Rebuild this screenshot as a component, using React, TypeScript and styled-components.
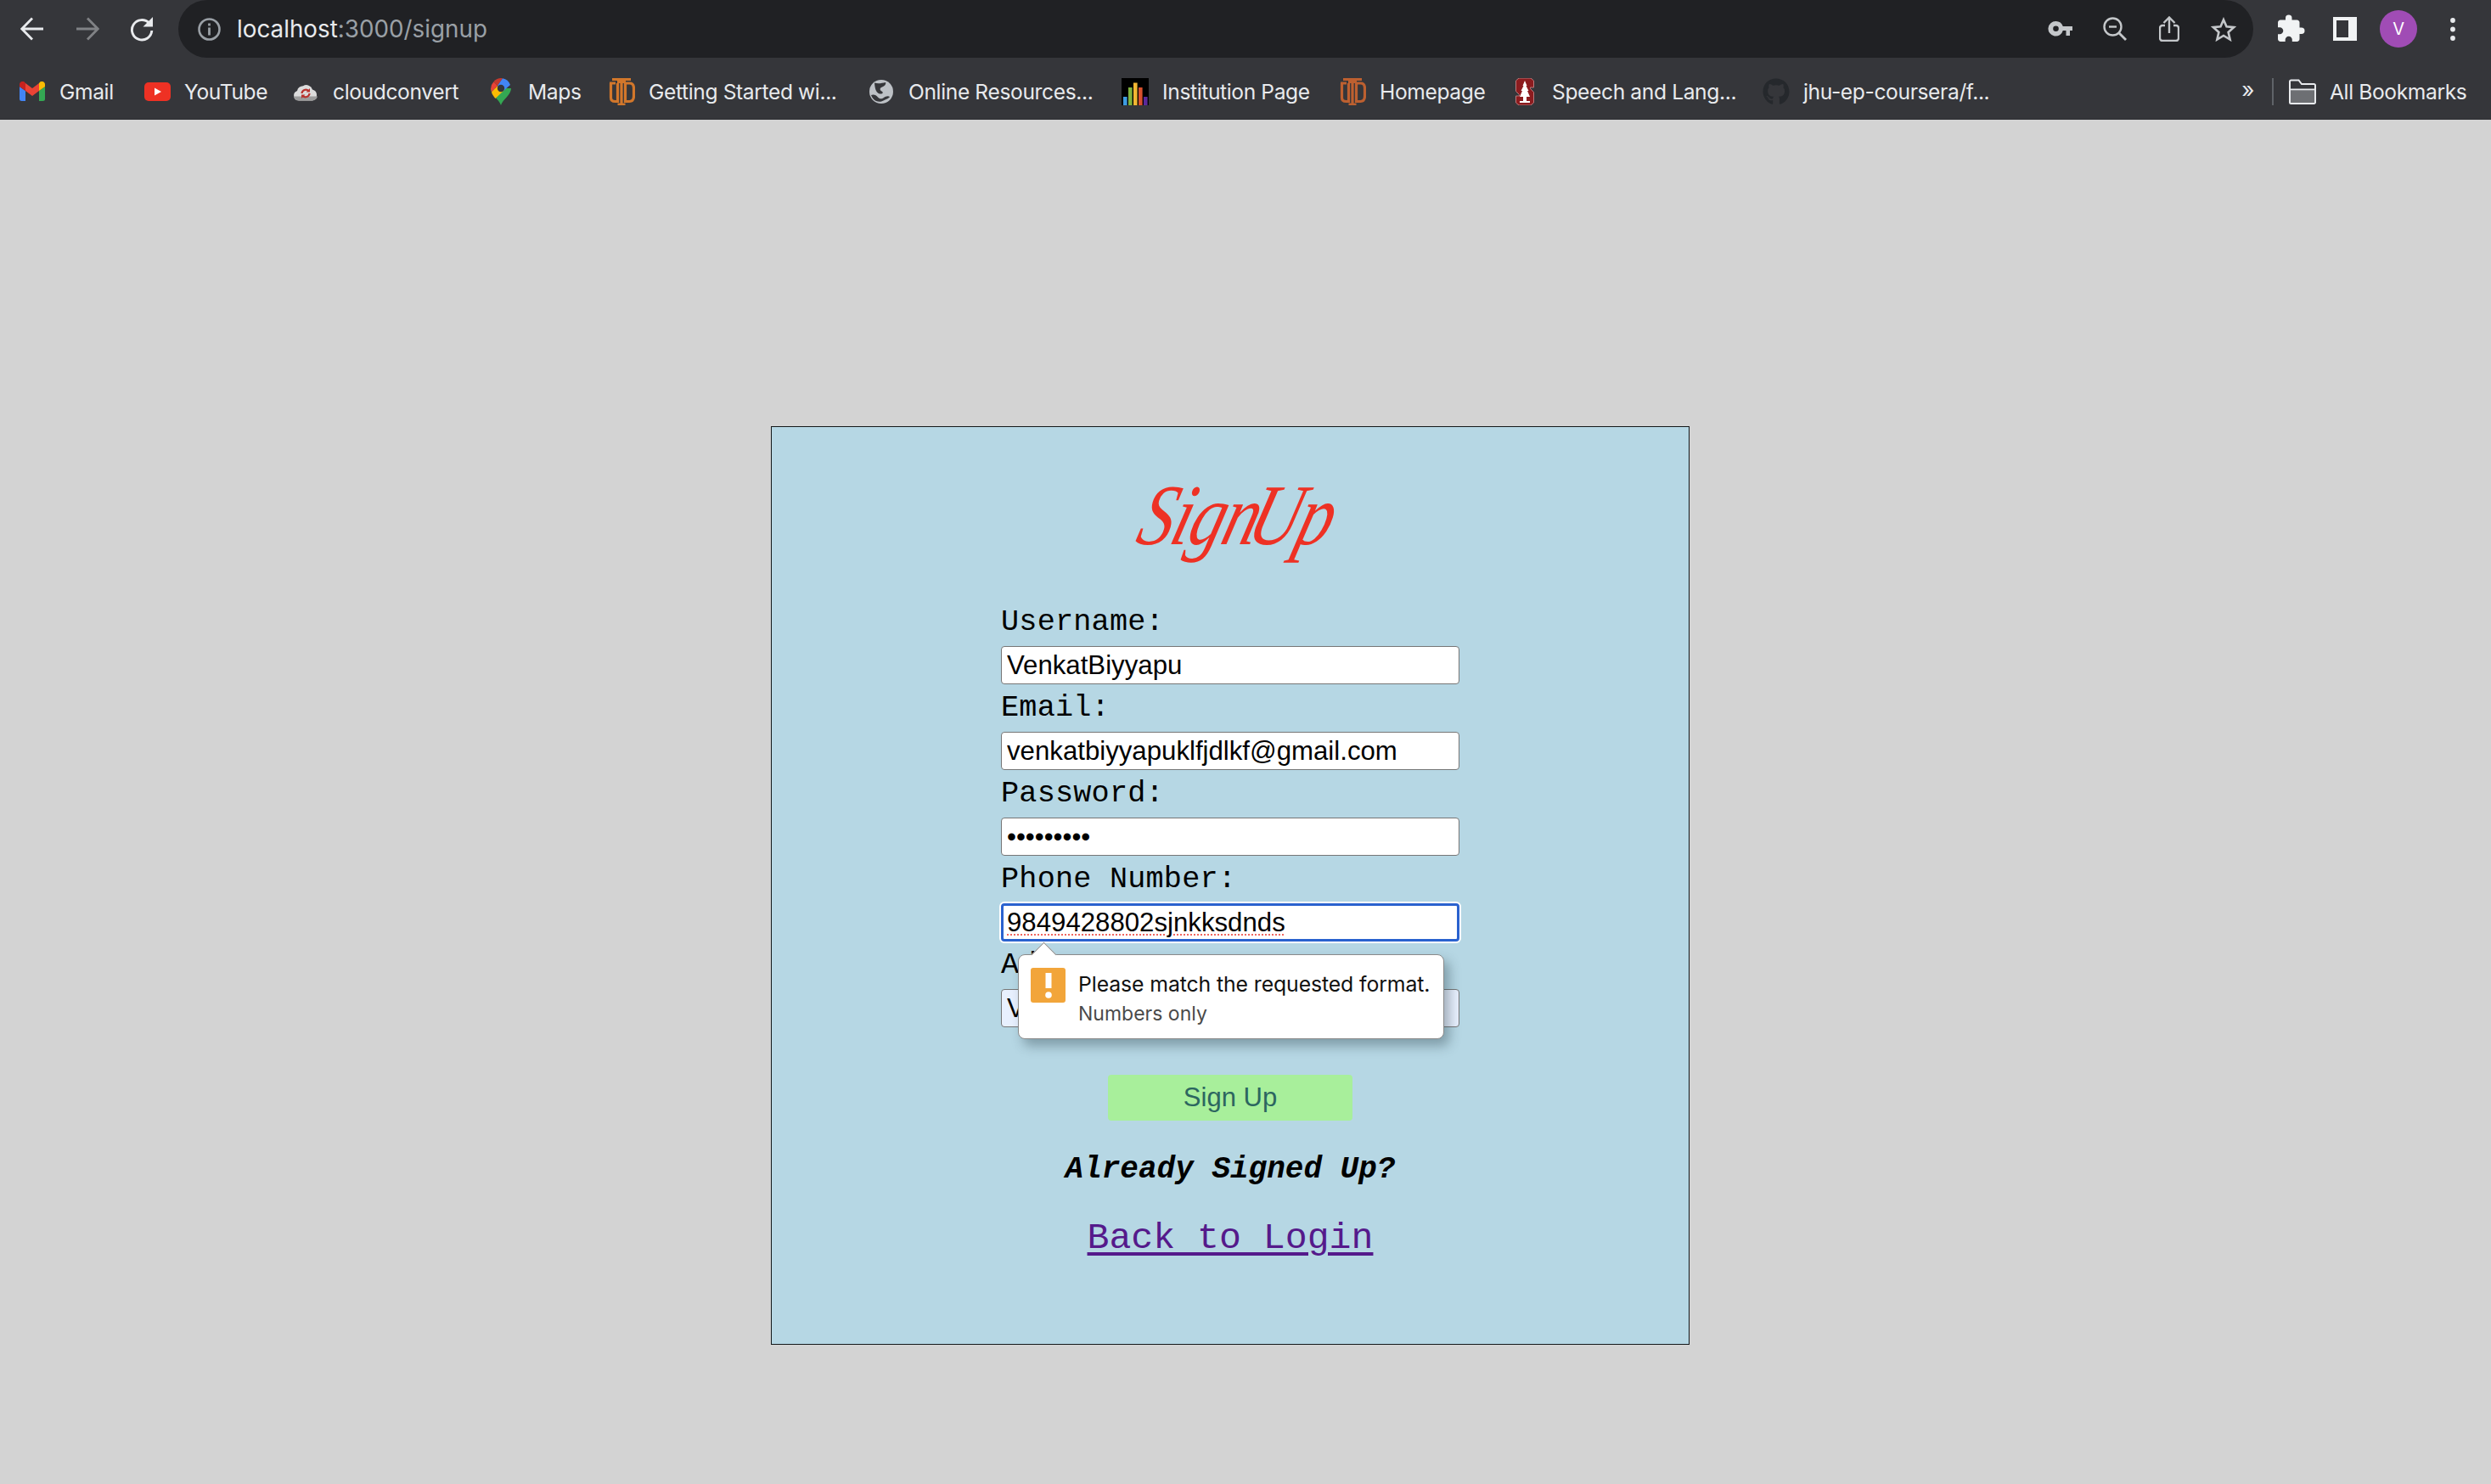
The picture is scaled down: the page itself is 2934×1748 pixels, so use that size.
import React from "react";
import styled, { createGlobalStyle } from "styled-components";
import { FaGithub } from "react-icons/fa";
import { MdExtension } from "react-icons/md";

const Global = createGlobalStyle`
  html, body { margin: 0; padding: 0; background: #d3d3d3; }
  body { font-family: "Liberation Sans", Arial, sans-serif; }
  * { box-sizing: border-box; }
`;

const Chrome = styled.header`
  background: #35363a;
  height: 141px;
  display: flex;
  flex-direction: column;
  border-bottom: 1px solid #2e2f33;
`;
const Toolbar = styled.div`
  display: flex;
  height: 72px;
  padding-left: 24px;
  align-items: flex-start;
`;
const NavGroup = styled.div`
  display: flex;
  gap: 36.5px;
  height: 68px;
  align-items: center;
  margin-right: 29px;
`;
const Omnibox = styled.div`
  width: 2444px;
  height: 68px;
  border-radius: 34px;
  background: #202124;
  display: flex;
  align-items: center;
  padding: 0 17px 0 23px;
`;
const Url = styled.div`
  margin-left: 19px;
  font: 400 27.8px Inter, "Liberation Sans", sans-serif;
  color: #e8eaed;
  flex: 1;
`;
const UrlRest = styled.span`
  color: #9aa0a6;
`;
const OmniActions = styled.div`
  display: flex;
  gap: 28.2px;
`;
const ActionSlot = styled.div`
  width: 36px;
  height: 36px;
  display: flex;
  align-items: center;
  justify-content: center;
`;
const ToolActions = styled.div`
  display: flex;
  gap: 19.6px;
  margin-left: 22px;
  height: 68px;
  align-items: center;
`;
const ToolSlot = styled.div`
  width: 44px;
  height: 44px;
  display: flex;
  align-items: center;
  justify-content: center;
`;
const Avatar = styled.div`
  width: 44px;
  height: 44px;
  border-radius: 50%;
  background: #a04cb5;
  color: #fff;
  font: 400 20px Inter, "Liberation Sans", sans-serif;
  display: flex;
  align-items: center;
  justify-content: center;
`;
const Bookmarks = styled.div`
  flex: 1;
  display: flex;
  align-items: center;
  padding: 3px 30px 0 22px;
  color: #e8eaed;
  font: 400 24.6px Inter, "Liberation Sans", sans-serif;
  letter-spacing: -0.38px;
`;
const Bookmark = styled.div<{ $w: number }>`
  width: ${(p) => p.$w}px;
  display: flex;
  align-items: center;
  gap: 16px;
  white-space: nowrap;
`;
const FavSlot = styled.div`
  width: 32px;
  height: 32px;
  flex: none;
  display: flex;
  align-items: center;
  justify-content: center;
`;
const Overflow = styled.div`
  margin-left: auto;
  font-size: 26px;
  line-height: 1;
  margin-top: -4px;
`;
const BarDivider = styled.div`
  width: 2px;
  height: 32px;
  background: #5f6368;
  margin: 0 18px 0 21px;
`;

const Page = styled.main`
  display: flex;
  justify-content: center;
  padding: 361px 36px 0 0;
`;
const Card = styled.section`
  width: 1082px;
  height: 1082px;
  background: #b6d7e4;
  border: 1px solid #14181a;
  display: flex;
  flex-direction: column;
  align-items: center;
`;
const TitleWrap = styled.div`
  height: 202px;
  display: flex;
  align-items: flex-start;
  justify-content: center;
  padding: 48px 0 0 18px;
`;
const Title = styled.h1`
  margin: 0;
  font: italic 400 102px/1.1 "Liberation Serif", serif;
  color: #ee3124;
  word-spacing: -0.34em;
  letter-spacing: -2px;
  transform: skewX(-16deg) scaleX(0.8);
  white-space: nowrap;
`;
const Form = styled.form`
  width: 540px;
  display: flex;
  flex-direction: column;
  align-items: stretch;
`;
const Field = styled.div`
  position: relative;
`;
const Label = styled.label`
  display: block;
  height: 56px;
  font: 400 35.2px/56px "Liberation Mono", "Courier New", monospace;
  letter-spacing: 0.2px;
  color: #000;
`;
const Input = styled.input<{ $autofill?: boolean }>`
  display: block;
  width: 540px;
  height: 45px;
  padding: 0 6px;
  font: 400 31.2px "Liberation Sans", Arial, sans-serif;
  color: #000;
  background: ${(p) => (p.$autofill ? "#e8f0fe" : "#fff")};
  border: 1.5px solid #767676;
  border-radius: 4px;
  outline: none;
`;
const FocusedInput = styled(Input)`
  border: 3px solid #2a62cf;
  padding: 0 4px;
  box-shadow: 0 0 0 2px #fff;
  text-decoration: underline dotted #f0655f 2px;
  text-underline-offset: 4px;
`;
const Bubble = styled.div`
  position: absolute;
  left: 20px;
  top: 116px;
  width: 502px;
  height: 100px;
  background: #fff;
  border: 1px solid #8a8a8a;
  border-radius: 8px;
  box-shadow: 6px 8px 14px rgba(40, 60, 70, 0.38);
  display: flex;
  align-items: flex-start;
  gap: 15px;
  padding: 15px 0 0 14px;
  z-index: 2;
  &::before {
    content: "";
    position: absolute;
    left: 19px;
    top: -11px;
    width: 20px;
    height: 20px;
    background: #fff;
    border-left: 1px solid #8a8a8a;
    border-top: 1px solid #8a8a8a;
    transform: rotate(45deg);
  }
`;
const WarnIcon = styled.div`
  width: 41px;
  height: 41px;
  flex: none;
  background: #f2a53a;
  border-radius: 3px;
  display: flex;
  align-items: center;
  justify-content: center;
`;
const BubbleText = styled.div`
  display: flex;
  flex-direction: column;
  margin-top: 1px;
  font-family: Inter, "Liberation Sans", sans-serif;
`;
const BubbleTitle = styled.div`
  font-size: 24.8px;
  line-height: 36px;
  color: #111;
  letter-spacing: -0.1px;
  white-space: nowrap;
`;
const BubbleSub = styled.div`
  font-size: 23px;
  line-height: 35px;
  color: #4a4a4a;
  white-space: nowrap;
`;
const SubmitRow = styled.div`
  display: flex;
  justify-content: center;
  margin-top: 56px;
`;
const Submit = styled.button`
  width: 288px;
  height: 54px;
  border: none;
  border-radius: 4px;
  background: #a8ef9b;
  color: #2c6660;
  font: 400 31px "Liberation Sans", Arial, sans-serif;
  padding: 0;
`;
const Already = styled.h4`
  margin: 34px 0 0;
  font: italic 700 36px/48px "Liberation Mono", "Courier New", monospace;
  color: #000;
`;
const BackLink = styled.a`
  margin-top: 29px;
  font: 400 43.2px/56px "Liberation Mono", "Courier New", monospace;
  color: #551a8b;
  text-decoration: underline;
  text-decoration-thickness: 4px;
  text-underline-offset: 5px;
  cursor: pointer;
`;

const Back = ({ color = "#e8eaed" }: { color?: string }) => (
  <svg width="28" height="28" viewBox="0 0 28 28" fill="none" stroke={color} strokeWidth="2.8">
    <path d="M27 14H2.5M14 1.5L1.8 14 14 26.5" />
  </svg>
);
const Forward = () => (
  <svg width="28" height="28" viewBox="0 0 28 28" fill="none" stroke="#808285" strokeWidth="2.8">
    <path d="M1 14h24.5M14 1.5L26.2 14 14 26.5" />
  </svg>
);
const Reload = () => (
  <svg width="28" height="30" viewBox="0 0 28 30" fill="none">
    <path d="M22.6 8.2A11.7 11.7 0 1 0 25.8 17" stroke="#e8eaed" strokeWidth="2.9" />
    <path d="M27 1v11.5H15.5z" fill="#e8eaed" />
  </svg>
);
const Info = () => (
  <svg width="27" height="27" viewBox="0 0 27 27" fill="none">
    <circle cx="13.5" cy="13.5" r="12" stroke="#9aa0a6" strokeWidth="2.6" />
    <rect x="12.1" y="11.5" width="2.8" height="9" fill="#9aa0a6" />
    <rect x="12.1" y="6.5" width="2.8" height="2.9" fill="#9aa0a6" />
  </svg>
);
const Key = () => (
  <svg width="29" height="20" viewBox="0 0 29 20">
    <path
      fillRule="evenodd"
      fill="#c4c7ca"
      d="M9.5 1a8.8 8.8 0 0 1 8.3 6H29v5h-3v6h-4.5v-6h-3.7A8.8 8.8 0 1 1 9.5 1zm0 5.5a3.3 3.3 0 1 0 0 6.6 3.3 3.3 0 0 0 0-6.6z"
    />
  </svg>
);
const ZoomOut = () => (
  <svg width="28" height="28" viewBox="0 0 28 28" fill="none" stroke="#c4c7ca" strokeWidth="2.4">
    <circle cx="11.5" cy="11.5" r="10" />
    <path d="M18.5 18.5L27 27" strokeWidth="2.8" />
    <path d="M7 11.5h9" />
  </svg>
);
const Share = () => (
  <svg width="24" height="30" viewBox="0 0 24 30" fill="none" stroke="#c4c7ca" strokeWidth="2.4">
    <path d="M7 11H4a3 3 0 0 0-3 3v12a3 3 0 0 0 3 3h16a3 3 0 0 0 3-3V14a3 3 0 0 0-3-3h-3" />
    <path d="M12 20V2M5.5 8L12 1.5 18.500 8" />
  </svg>
);
const Star = () => (
  <svg width="30" height="29" viewBox="0 0 30 29" fill="none" stroke="#c4c7ca" strokeWidth="2.6">
    <path d="M15 3.200l3.500 8.100 8.700.8-6.600 5.800 2 8.600L15 21.900l-7.600 4.600 2-8.600-6.600-5.800 8.700-.8z" />
  </svg>
);
const Panel = () => (
  <svg width="28" height="28" viewBox="0 0 28 28">
    <rect width="28" height="28" fill="#f1f3f4" />
    <rect x="4" y="4" width="14" height="20" fill="#35363a" />
  </svg>
);
const Dots = () => (
  <svg width="6" height="27" viewBox="0 0 6 27" fill="#e8eaed">
    <circle cx="3" cy="3" r="2.900" />
    <circle cx="3" cy="13.500" r="2.900" />
    <circle cx="3" cy="24" r="2.900" />
  </svg>
);
const Gmail = () => (
  <svg width="30" height="23" viewBox="0 0 30 23">
    <path d="M0 20.500A2.500 2.500 0 0 0 2.500 23H7V11L0 6z" fill="#4285f4" />
    <path d="M23 23h4.500A2.500 2.500 0 0 0 30 20.500V6l-7 5z" fill="#34a853" />
    <path d="M23 2v9l7-5V3.500c0-3-3.400-4.700-5.800-2.900z" fill="#fbbc04" />
    <path d="M7 11V2l8 6 8-6v9l-8 6z" fill="#ea4335" />
    <path d="M0 3.500V6l7 5V2L5.800.6C3.400-1.200 0 .5 0 3.500z" fill="#c5221f" />
  </svg>
);
const YouTube = () => (
  <svg width="31" height="22" viewBox="0 0 31 22">
    <rect width="31" height="22" rx="5" fill="#ee3124" />
    <path d="M12 6.500l8 4.500-8 4.500z" fill="#fff" />
  </svg>
);
const CloudConvert = () => (
  <svg width="30" height="22" viewBox="0 0 30 22">
    <path
      d="M7 21.500a6 6 0 0 1-2-11.600A7 7 0 0 1 12 4.200a7.500 7.500 0 0 1 11 4.300 6.700 6.700 0 0 1 0 13z"
      fill="#dcdcdc"
    />
    <path d="M7 21.500a6 6 0 0 1-6-5h28a6.700 6.700 0 0 1-6 5z" fill="#9c9c9c" />
    <path d="M10.500 13a4.700 4.700 0 0 1 8-3M19.500 13a4.700 4.700 0 0 1-8 3" fill="none" stroke="#b8322e" strokeWidth="2.200" />
    <path d="M20 7v4.500h-4.500zM10 19v-4.500h4.500z" fill="#b8322e" />
  </svg>
);
const Maps = () => (
  <svg width="24" height="32" viewBox="0 0 24 32">
    <path d="M12 32C10 25 0 20 0 12h24c0 8-10 13-12 20z" fill="#34a853" />
    <path d="M1 16.500L8 9l7 6-9.500 9C3.500 21.500 1.500 19 1 16.500z" fill="#fbbc04" />
    <path d="M3.500 4.200L8 9l-7 7.500A12 12 0 0 1 3.500 4.200z" fill="#ea4335" />
    <path d="M3.500 4.200A12 12 0 0 1 14 .2L8 9z" fill="#c5392d" />
    <path d="M14 .2A12 12 0 0 1 23 8l-8 7-7-6z" fill="#4285f4" />
    <circle cx="12" cy="12" r="4.200" fill="#35363a" />
  </svg>
);
const Utd = ({ dark }: { dark?: boolean }) => {
  const c = dark ? "#bd6030" : "#d2772b";
  return (
    <svg width="32" height="32" viewBox="0 0 32 32" fill="none" stroke={c} strokeWidth="3.2">
      <path d="M5 1.500h22M11 4.500h10M16 1.500V31M11.500 31h9" />
      <path d="M2 6h7M3.500 6v17c0 3 2 4.500 5 4.500h3V6" />
      <path d="M20.500 6h5c3.500 0 5 2.500 5 6v9c0 4-1.500 6.500-5 6.500h-5z" />
    </svg>
  );
};
const Globe = () => (
  <svg width="28" height="28" viewBox="0 0 28 28">
    <circle cx="14" cy="14" r="14" fill="#bdc1c6" />
    <path d="M6 3.500c4 1.500 9 .5 13-.5 1 2-1 4.500-4 5.500-3 1-3 3.500-.5 5 2.500 1.500 1 3.500-2 3-3.500-.5-6-4-6.500-13z" fill="#35363a" />
    <path d="M2 18c3-1.500 6 0 8 2.500 2 2.500 5 2 7 .5 2-1.500 5-2.500 7-1-1 2-5 3-7.500 4.500-3 1.800-6 1.500-8.500.5-2.500-1-5-4-6-7z" fill="#35363a" />
  </svg>
);
const Institution = () => (
  <svg width="32" height="32" viewBox="0 0 32 32">
    <rect width="32" height="32" fill="#000" />
    <rect x="2" y="22" width="4.600" height="10" fill="#3d9be0" />
    <rect x="8" y="11" width="4.600" height="21" fill="#7fb23e" />
    <rect x="14" y="5.500" width="4.600" height="26.500" fill="#f2b632" />
    <rect x="20" y="11" width="4.600" height="21" fill="#d9502c" />
    <rect x="26" y="22" width="4.600" height="10" fill="#5a2a9a" />
  </svg>
);
const Stanford = () => (
  <svg width="22" height="32" viewBox="0 0 22 32">
    <path
      d="M4 0h14l3.500 3v8h-4v1.500l4 4V29l-3.500 3H4l-3.500-3v-8h4v-1.500l-4-4V3z"
      fill="#8c1c1f"
      stroke="#b9797a"
      strokeWidth="1"
    />
    <path d="M11 3l2.500 6-1 0 3 6-1.500 0 3 7-4 0v5h4v2H5v-2h4v-5H5l3-7H6.500l3-6-1 0z" fill="#fff" />
  </svg>
);
const Folder = () => (
  <svg width="32" height="30" viewBox="0 0 32 30">
    <path d="M1 14h30v13.500a1.500 1.500 0 0 1-1.500 1.500h-27A1.500 1.500 0 0 1 1 27.500z" fill="#6d6f73" />
    <path
      d="M1 3a1.500 1.500 0 0 1 1.500-1.500h9L15 6h14.500A1.500 1.500 0 0 1 31 7.500v20a1.500 1.500 0 0 1-1.500 1.500h-27A1.500 1.500 0 0 1 1 27.500zM1 12.500h30"
      fill="none"
      stroke="#e8eaed"
      strokeWidth="2"
    />
  </svg>
);
const Bang = () => (
  <svg width="14" height="32" viewBox="0 0 14 32">
    <rect x="3.500" y="1" width="7" height="18" fill="#fff" />
    <circle cx="7" cy="27" r="3.800" fill="#fff" />
  </svg>
);

const bookmarks: { w: number; label: string; icon: React.ReactNode }[] = [
  { w: 147, label: "Gmail", icon: <Gmail /> },
  { w: 175, label: "YouTube", icon: <YouTube /> },
  { w: 230, label: "cloudconvert", icon: <CloudConvert /> },
  { w: 142, label: "Maps", icon: <Maps /> },
  { w: 306, label: "Getting Started wi...", icon: <Utd /> },
  { w: 299, label: "Online Resources...", icon: <Globe /> },
  { w: 256, label: "Institution Page", icon: <Institution /> },
  { w: 203, label: "Homepage", icon: <Utd dark /> },
  { w: 296, label: "Speech and Lang...", icon: <Stanford /> },
  { w: 290, label: "jhu-ep-coursera/f...", icon: <FaGithub size={32} color="#25282c" /> },
];

export default function App() {
  return (
    <>
      <Global />
      <Chrome>
        <Toolbar>
          <NavGroup>
            <Back />
            <Forward />
            <Reload />
          </NavGroup>
          <Omnibox>
            <Info />
            <Url>
              localhost<UrlRest>:3000/signup</UrlRest>
            </Url>
            <OmniActions>
              <ActionSlot><Key /></ActionSlot>
              <ActionSlot><ZoomOut /></ActionSlot>
              <ActionSlot><Share /></ActionSlot>
              <ActionSlot><Star /></ActionSlot>
            </OmniActions>
          </Omnibox>
          <ToolActions>
            <ToolSlot><MdExtension size={36} color="#f1f3f4" /></ToolSlot>
            <ToolSlot><Panel /></ToolSlot>
            <Avatar>V</Avatar>
            <ToolSlot><Dots /></ToolSlot>
          </ToolActions>
        </Toolbar>
        <Bookmarks>
          {bookmarks.map((b) => (
            <Bookmark key={b.label} $w={b.w}>
              <FavSlot>{b.icon}</FavSlot>
              {b.label}
            </Bookmark>
          ))}
          <Overflow>»</Overflow>
          <BarDivider />
          <Bookmark $w={208}>
            <FavSlot><Folder /></FavSlot>
            All Bookmarks
          </Bookmark>
        </Bookmarks>
      </Chrome>
      <Page>
        <Card>
          <TitleWrap>
            <Title>Sign Up</Title>
          </TitleWrap>
          <Form onSubmit={(e) => e.preventDefault()}>
            <Field>
              <Label>Username:</Label>
              <Input type="text" defaultValue="VenkatBiyyapu" spellCheck={false} />
            </Field>
            <Field>
              <Label>Email:</Label>
              <Input type="text" defaultValue="venkatbiyyapuklfjdlkf@gmail.com" spellCheck={false} />
            </Field>
            <Field>
              <Label>Password:</Label>
              <Input type="password" defaultValue="123456789" />
            </Field>
            <Field>
              <Label>Phone Number:</Label>
              <FocusedInput type="text" defaultValue="9849428802sjnkksdnds" spellCheck={false} />
              <Bubble>
                <WarnIcon><Bang /></WarnIcon>
                <BubbleText>
                  <BubbleTitle>Please match the requested format.</BubbleTitle>
                  <BubbleSub>Numbers only</BubbleSub>
                </BubbleText>
              </Bubble>
            </Field>
            <Field>
              <Label>Address:</Label>
              <Input $autofill type="text" defaultValue="V" spellCheck={false} />
            </Field>
            <SubmitRow>
              <Submit type="button">Sign Up</Submit>
            </SubmitRow>
          </Form>
          <Already>Already Signed Up?</Already>
          <BackLink>Back to Login</BackLink>
        </Card>
      </Page>
    </>
  );
}
